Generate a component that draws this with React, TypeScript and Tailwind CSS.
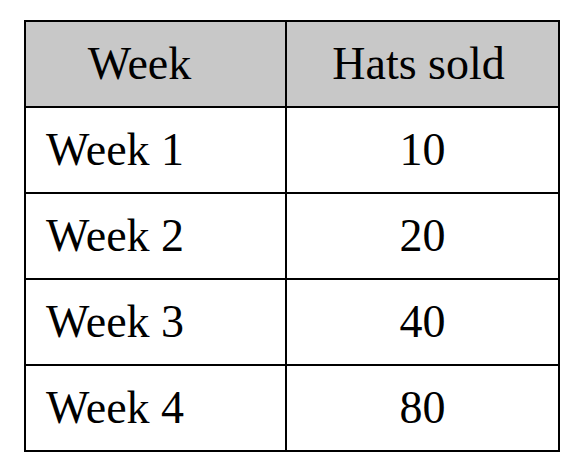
const rows = [
  { week: 'Week 1', hats: 10 },
  { week: 'Week 2', hats: 20 },
  { week: 'Week 3', hats: 40 },
  { week: 'Week 4', hats: 80 },
];

const App = () => {
  return (
    <div className="w-[567px] h-[462px] bg-white pt-[20px] pl-[24px] font-serif text-black">
      <table className="w-[536px] border-collapse border-2 border-black font-['Liberation_Serif'] text-[46px] leading-none">
        <thead>
          <tr className="h-[86px] bg-[#c8c8c8]">
            <th className="w-[261px] border-2 border-black pr-[32px] text-center font-normal">Week</th>
            <th className="border-2 border-black pr-[8px] text-center font-normal">Hats sold</th>
          </tr>
        </thead>
        <tbody>
          {rows.map((row) => (
            <tr key={row.week} className="h-[86px]">
              <td className="border-2 border-black pl-[20px] text-left">{row.week}</td>
              <td className="border-2 border-black text-center">{row.hats}</td>
            </tr>
          ))}
        </tbody>
      </table>
    </div>
  );
};

export default App;
